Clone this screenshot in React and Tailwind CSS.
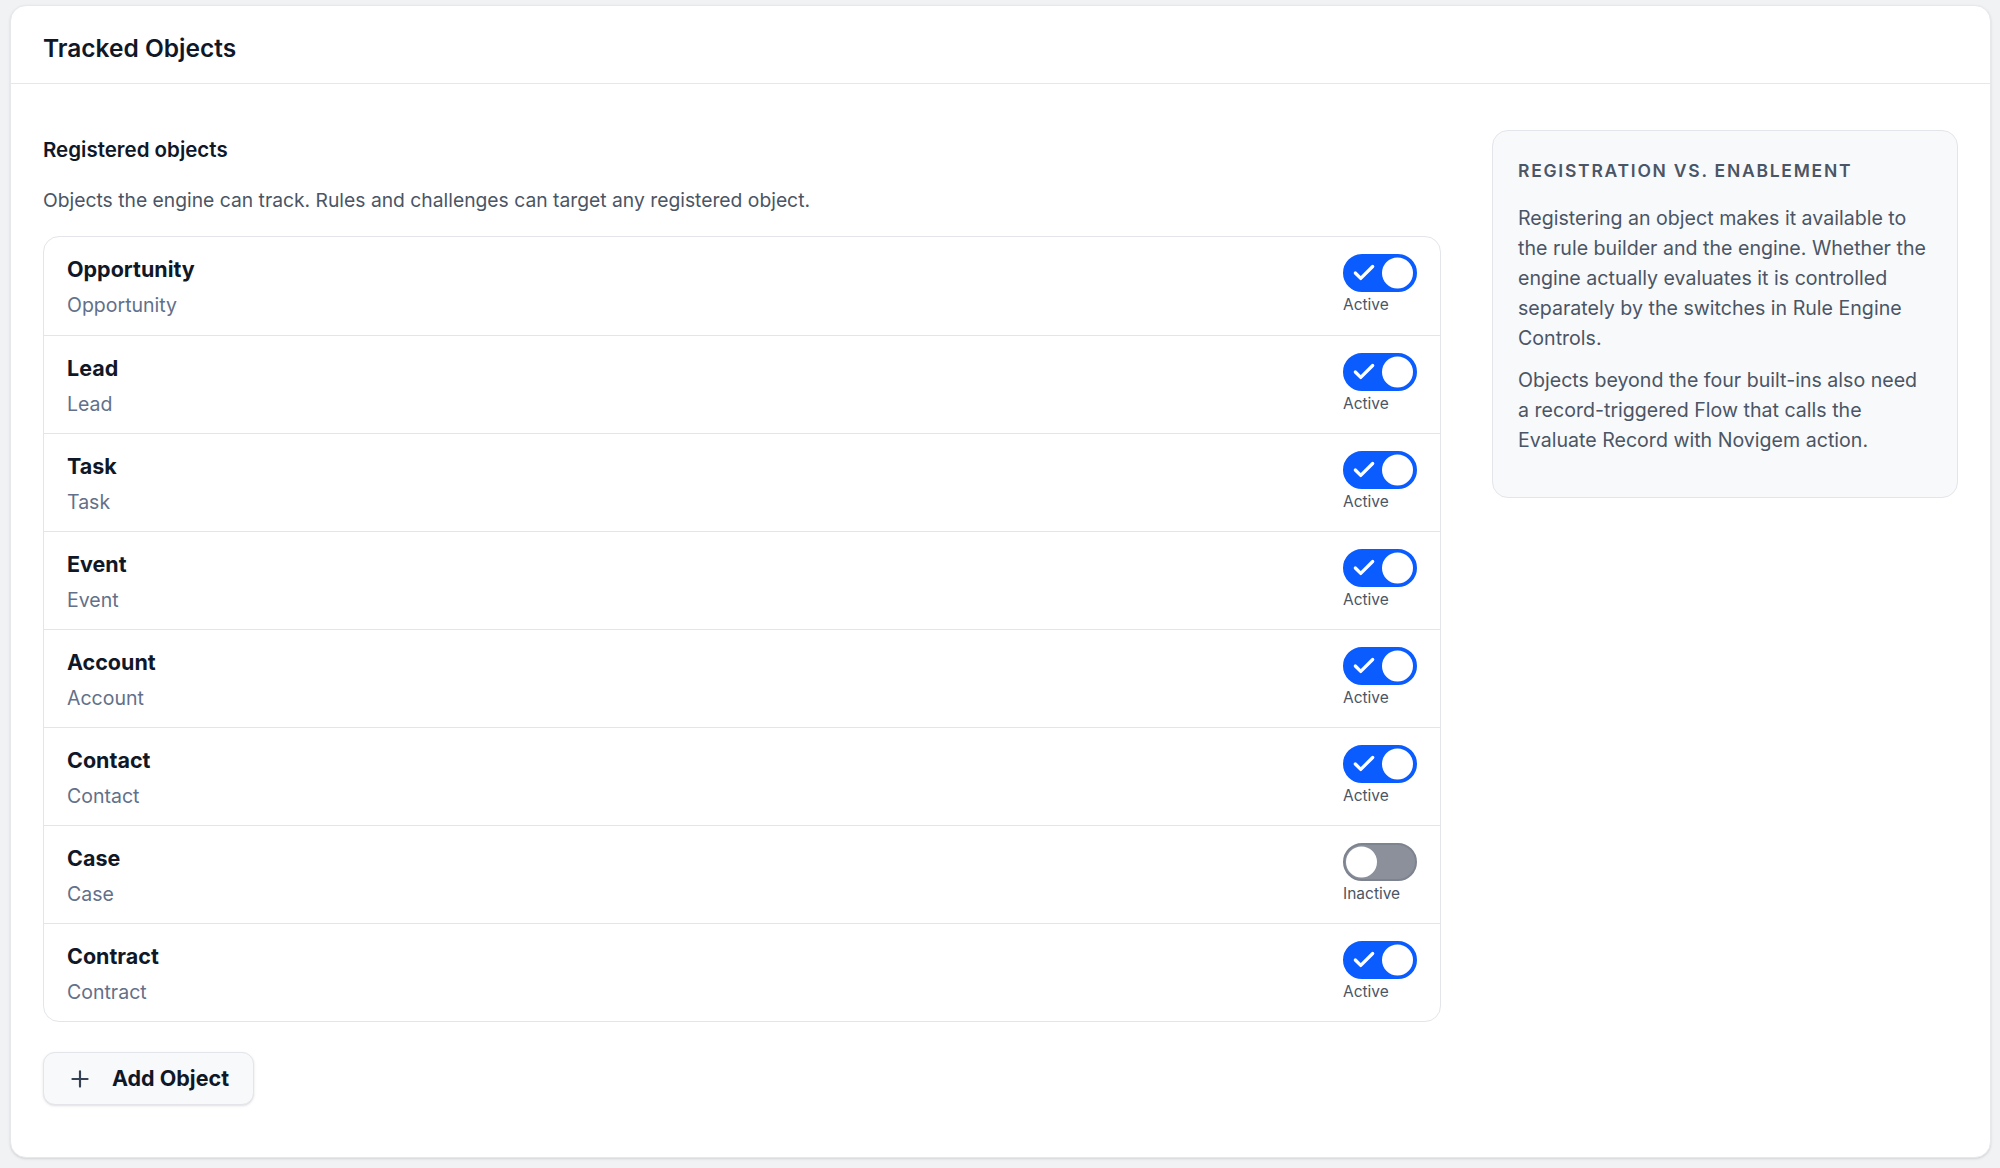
import { useState } from "react";
import { Check, Plus } from "lucide-react";

const OBJECTS = [
  { name: "Opportunity", api: "Opportunity", active: true },
  { name: "Lead", api: "Lead", active: true },
  { name: "Task", api: "Task", active: true },
  { name: "Event", api: "Event", active: true },
  { name: "Account", api: "Account", active: true },
  { name: "Contact", api: "Contact", active: true },
  { name: "Case", api: "Case", active: false },
  { name: "Contract", api: "Contract", active: true },
];

const Toggle = ({ on, onChange }) => (
  <div className="flex flex-col items-start gap-[3px]">
    <button
      type="button"
      role="switch"
      aria-checked={on}
      onClick={onChange}
      className={`relative flex h-[38px] w-[74px] items-center rounded-full border-2 transition ${
        on
          ? "border-[#0b5cff] bg-[#0b5cff]"
          : "border-[#7d838f] bg-[#8b909b]"
      }`}
    >
      {on && (
        <Check
          size={26}
          strokeWidth={3}
          className="absolute left-[6px] top-1/2 -translate-y-1/2 text-white"
        />
      )}
      <span
        className={`absolute top-1/2 h-[31px] w-[31px] -translate-y-1/2 rounded-full bg-white transition-all ${
          on ? "left-[37px]" : "left-[1px]"
        }`}
      />
    </button>
    <span className="text-[15.5px] leading-[20px] text-[#4a5565]">
      {on ? "Active" : "Inactive"}
    </span>
  </div>
);

const App = () => {
  const [objects, setObjects] = useState(OBJECTS);

  const flip = (i) =>
    setObjects((prev) =>
      prev.map((o, j) => (j === i ? { ...o, active: !o.active } : o)),
    );

  return (
    <div
      className="min-h-[1168px] bg-[#f1f2f4] pb-[12px] pl-[10px] pr-[9px] pt-[5px]"
      style={{ fontFamily: "Inter, 'Noto Sans', sans-serif" }}
    >
      <div className="rounded-2xl border border-[#e6e8ec] bg-white shadow-sm">
        <div className="flex h-[78px] items-center border-b border-[#e5e7eb] px-[32px] pt-[8px]">
          <h1 className="text-[24.5px] font-semibold text-[#101828]">
            Tracked Objects
          </h1>
        </div>

        <div className="flex gap-[51px] px-[32px] pb-[52px] pt-[46px]">
          <div className="flex-1 pt-[6px]">
            <h2 className="text-[20.5px] font-semibold leading-[28px] text-[#101828]">
              Registered objects
            </h2>
            <p className="mt-[22px] text-[19.3px] leading-[28px] text-[#4a5565]">
              Objects the engine can track. Rules and challenges can target any
              registered object.
            </p>

            <div className="mt-[22px] overflow-hidden rounded-2xl border border-[#e3e5ea]">
              {objects.map((o, i) => (
                <div
                  key={o.api}
                  className={`flex h-[98px] items-start justify-between px-[23px] pt-[17px] ${
                    i > 0 ? "border-t border-[#e3e5ea]" : ""
                  }`}
                >
                  <div>
                    <div className="text-[21.5px] font-bold leading-[30px] text-[#101828]">
                      {o.name}
                    </div>
                    <div className="mt-[8px] text-[19.5px] leading-[26px] text-[#62708a]">
                      {o.api}
                    </div>
                  </div>
                  <Toggle on={o.active} onChange={() => flip(i)} />
                </div>
              ))}
            </div>

            <button
              type="button"
              className="mt-[30px] flex h-[53px] items-center gap-[19px] rounded-xl border border-[#e3e5ea] bg-[#f8f9fb] pl-[23px] pr-[24px] text-[21.5px] font-bold text-[#101828] shadow-sm"
            >
              <Plus size={26} strokeWidth={2} className="text-[#364153]" />
              Add Object
            </button>
          </div>

          <aside className="w-[466px] shrink-0 self-start rounded-2xl border border-[#e3e5ea] bg-[#f8f9fb] px-[25px] pb-[42px] pt-[28px]">
            <h3 className="text-[17.5px] font-semibold uppercase leading-[24px] tracking-[0.1em] text-[#4a5565]">
              Registration vs. Enablement
            </h3>
            <p className="mt-[20px] text-[19.6px] leading-[30px] text-[#4a5565]">
              Registering an object makes it available to the rule builder and
              the engine. Whether the engine actually evaluates it is controlled
              separately by the switches in Rule Engine Controls.
            </p>
            <p className="mt-[12px] text-[19.6px] leading-[30px] text-[#4a5565]">
              Objects beyond the four built-ins also need a record-triggered
              Flow that calls the Evaluate Record with Novigem action.
            </p>
          </aside>
        </div>
      </div>
    </div>
  );
};

export default App;
